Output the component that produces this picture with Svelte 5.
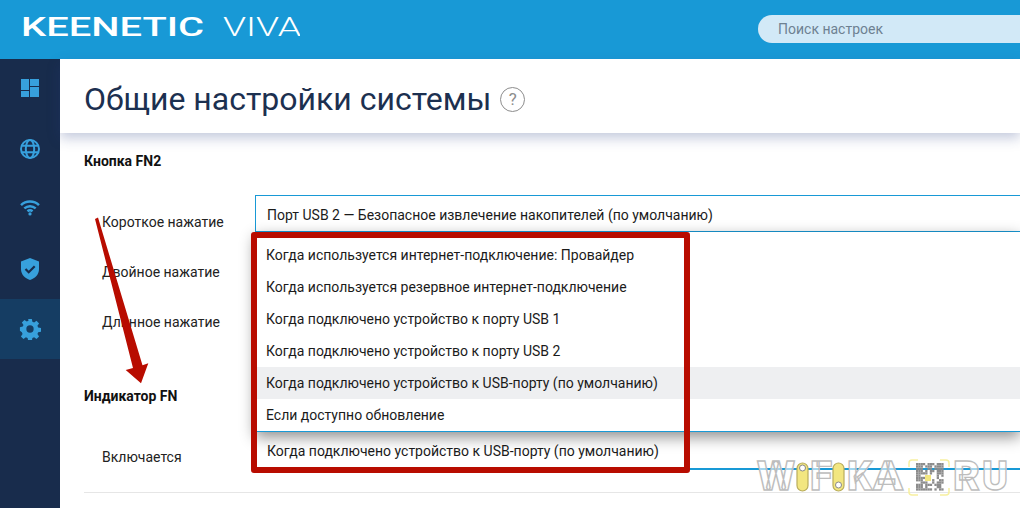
<script>
  const options = [
    'Когда используется интернет-подключение: Провайдер',
    'Когда используется резервное интернет-подключение',
    'Когда подключено устройство к порту USB 1',
    'Когда подключено устройство к порту USB 2',
    'Когда подключено устройство к USB-порту (по умолчанию)',
    'Если доступно обновление'
  ];
  const activeOption = 4;
  let seed = 7;
  const qr = [];
  for (let y = 0; y < 12; y++) {
    for (let x = 0; x < 12; x++) {
      seed = (seed * 73 + 41) % 101;
      const corner = (x < 3 && y < 3) || (x > 8 && y < 3) || (x < 3 && y > 8);
      const hole = x > 4 && x < 7 && y > 4 && y < 8;
      if (!hole && (corner || seed % 5 < 3)) qr.push({ x: 916 + x * 2.3, y: 463 + y * 2.3 });
    }
  }
</script>

<div class="page">
  <header class="topbar">
    <svg class="logo" width="300" height="59" viewBox="0 0 300 59" aria-label="Keenetic Viva">
      <text x="21" y="36" class="brand" textLength="183" lengthAdjust="spacingAndGlyphs">KEENETIC</text>
      <text x="223" y="36" class="model" textLength="78" lengthAdjust="spacingAndGlyphs">VIVA</text>
    </svg>
    <div class="search">Поиск настроек</div>
  </header>

  <div class="body">
    <nav class="side">
      <div class="nav-item">
        <svg width="20" height="20" viewBox="0 0 20 20"><path d="M1 0h8v11H1zM1 12h8v6H1zM10 0h9v7h-9zM10 8h9v10h-9z" /></svg>
      </div>
      <div class="nav-item">
        <svg width="22" height="22" viewBox="0 0 22 22" class="line">
          <circle cx="11" cy="11" r="9" />
          <ellipse cx="11" cy="11" rx="4.2" ry="9" />
          <path d="M2.5 7.7h17M2.5 14.3h17" />
        </svg>
      </div>
      <div class="nav-item">
        <svg width="22" height="17" viewBox="0 0 22 18" class="wifi">
          <path d="M1.5 6.5C6.5 1.500 15.500 1.500 20.500 6.500" />
          <path d="M5 10c3.500-3.200 8.500-3.200 12 0" />
          <path d="M8.300 13c1.600-1.300 3.800-1.300 5.400 0" />
          <circle cx="11" cy="15.800" r="1.700" class="dot" />
        </svg>
      </div>
      <div class="nav-item">
        <svg width="20" height="24" viewBox="0 0 20 24">
          <path d="M10 1l9 3.500v7.500c0 5.500-3.800 9.200-9 11-5.200-1.800-9-5.500-9-11V4.500z" />
          <path d="M5.500 12l3.200 3.200 6-6" class="check" />
        </svg>
      </div>
      <div class="nav-item current">
        <svg width="22" height="22" viewBox="0 0 24 24"><path fill-rule="evenodd" d="M10 1h4l.6 3.100 1.900.8 2.600-1.800 2.800 2.800-1.800 2.600.8 1.900 3.100.6v4l-3.100.6-.8 1.900 1.800 2.600-2.800 2.800-2.600-1.800-1.900.8-.6 3.100h-4l-.6-3.100-1.900-.8-2.600 1.800-2.800-2.800 1.800-2.600-.8-1.900L1 14v-4l3.100-.6.8-1.900L3.100 4.900l2.800-2.800 2.600 1.800 1.900-.8zM12 8a4 4 0 100 8 4 4 0 000-8z" /></svg>
      </div>
    </nav>

    <main class="main">
      <div class="title-bar">
        <h1>Общие настройки системы</h1>
        <span class="help">?</span>
      </div>

      <section class="content">
        <h2 class="first">Кнопка FN2</h2>
        <div class="row">
          <span class="label">Короткое нажатие</span>
          <div class="select-wrap">
            <div class="select">Порт USB 2 — Безопасное извлечение накопителей (по умолчанию)</div>
            <ul class="dropdown">
              {#each options as option, i}
                <li class:active={i === activeOption}>{option}</li>
              {/each}
            </ul>
          </div>
        </div>
        <div class="row"><span class="label">Двойное нажатие</span></div>
        <div class="row"><span class="label">Длинное нажатие</span></div>

        <h2 class="second">Индикатор FN</h2>
        <div class="row last">
          <span class="label">Включается</span>
          <div class="select-wrap">
            <div class="select plain">Когда подключено устройство к USB-порту (по умолчанию)</div>
          </div>
        </div>
      </section>
    </main>
  </div>

  <div class="red-box"></div>

  <svg class="overlay" width="1020" height="508" viewBox="0 0 1020 508" aria-hidden="true">
    <path class="arrow" d="M95 219L98 217.500 142.500 365.300 148.300 363.300 141 383.300 125.700 370 133 368z" />
    <g class="mark">
      <text x="757" y="490" textLength="38" lengthAdjust="spacingAndGlyphs">W</text>
      <text x="810" y="490" textLength="22" lengthAdjust="spacingAndGlyphs">F</text>
      <text x="847" y="490" textLength="25" lengthAdjust="spacingAndGlyphs">K</text>
      <text x="873" y="490" textLength="30" lengthAdjust="spacingAndGlyphs">A</text>
      <text x="953" y="490" textLength="27" lengthAdjust="spacingAndGlyphs">R</text>
      <text x="982" y="490" textLength="26" lengthAdjust="spacingAndGlyphs">U</text>
    </g>
    <rect class="pill" x="797" y="463" width="11" height="28" rx="5.500" />
    <circle class="pill-dot" cx="802.500" cy="468" r="3" />
    <rect class="pill" x="833" y="463" width="11" height="28" rx="5.500" />
    <circle class="pill-dot" cx="838.500" cy="485" r="3" />
    <path class="frame" d="M909 467v-4a3 3 0 013-3h6M940 460h6a3 3 0 013 3v4M949 488v4a3 3 0 01-3 3h-6M918 495h-6a3 3 0 01-3-3v-4" />
    {#each qr as c}
      <rect class="qr" x={c.x} y={c.y} width="2.300" height="2.300" />
    {/each}
    <rect class="qr-mid" x="925" y="475" width="6" height="6" />
  </svg>
</div>

<style>
  :global(body) {
    margin: 0;
    background: #fff;
  }
  .page {
    position: relative;
    width: 1020px;
    height: 508px;
    overflow: hidden;
    font-family: Roboto, "Liberation Sans", sans-serif;
    color: #1b1b1b;
  }
  .topbar {
    height: 59px;
    background: #1899d6;
    display: flex;
    align-items: center;
    justify-content: space-between;
  }
  .logo {
    display: block;
  }
  .brand {
    font: 500 25px Roboto, sans-serif;
    fill: #fff;
  }
  .model {
    font: 300 25px Roboto, sans-serif;
    fill: #fff;
  }
  .search {
    width: 242px;
    height: 28px;
    margin-top: -1px;
    padding-left: 20px;
    border-radius: 14px 0 0 14px;
    background: #d2e9f7;
    color: #6e8192;
    font-size: 14px;
    line-height: 28px;
  }
  .body {
    display: flex;
    height: 449px;
  }
  .side {
    width: 60px;
    flex: none;
    background: #182c4c;
  }
  .nav-item {
    height: 60px;
    display: flex;
    align-items: center;
    justify-content: center;
  }
  .nav-item.current {
    background: #153d63;
  }
  .nav-item svg {
    fill: #37a0dc;
  }
  .nav-item svg.line {
    fill: none;
    stroke: #37a0dc;
    stroke-width: 2;
  }
  .nav-item svg.wifi {
    fill: none;
    stroke: #37a0dc;
    stroke-width: 2.600;
    margin-top: -3px;
  }
  .nav-item .dot {
    fill: #37a0dc;
    stroke: none;
  }
  .nav-item .check {
    fill: none;
    stroke: #182c4c;
    stroke-width: 2.200;
  }
  .main {
    flex: 1;
    min-width: 0;
  }
  .title-bar {
    height: 68px;
    padding-top: 6px;
    padding-left: 24px;
    display: flex;
    align-items: center;
    gap: 9px;
    position: relative;
    background: #fff;
    box-shadow: 0 5px 12px rgba(40, 60, 130, 0.28);
  }
  h1 {
    margin: 0;
    font-size: 32px;
    font-weight: 400;
    color: #1c3050;
  }
  .help {
    width: 23px;
    height: 23px;
    border: 1px solid #8d8d8d;
    border-radius: 50%;
    color: #8d8d8d;
    font-size: 17px;
    line-height: 23px;
    text-align: center;
  }
  .content {
    padding-left: 24px;
  }
  h2 {
    margin: 0;
    font-size: 14px;
    font-weight: 700;
    color: #111;
    line-height: 20px;
  }
  h2.first {
    padding-top: 18px;
    padding-bottom: 24px;
  }
  h2.second {
    padding-top: 41px;
    padding-bottom: 26px;
  }
  .row {
    display: grid;
    grid-template-columns: 171px 1fr;
    height: 50px;
  }
  .row.last {
    height: 60px;
    border-bottom: 1px solid #e6e6e6;
  }
  .label {
    padding-left: 18px;
    padding-top: 18px;
    font-size: 14px;
    line-height: 18px;
    color: #222;
  }
  .row.last .label {
    padding-top: 16px;
  }
  .select-wrap {
    position: relative;
  }
  .select {
    height: 37px;
    box-sizing: border-box;
    padding-left: 11px;
    border: 1px solid #1899d6;
    border-right: 0;
    font-size: 14px;
    line-height: 38px;
    color: #1b1b1b;
  }
  .select.plain {
    border-top: 0;
    border-left: 0;
    border-bottom-width: 2px;
    line-height: 38px;
    height: 38px;
    padding-left: 12px;
  }
  .dropdown {
    position: absolute;
    left: 0;
    right: 0;
    top: 37px;
    margin: 0;
    padding: 7px 0 0;
    height: 192px;
    list-style: none;
    background: #fff;
    border-bottom: 1px solid #1899d6;
    box-shadow: 0 5px 14px rgba(0, 0, 0, 0.45);
    z-index: 2;
  }
  .dropdown li {
    height: 32px;
    padding-left: 11px;
    font-size: 14px;
    line-height: 32px;
  }
  .dropdown li.active {
    background: #eeeff1;
  }
  .red-box {
    position: absolute;
    left: 251px;
    top: 232px;
    width: 439px;
    height: 241px;
    box-sizing: border-box;
    border: 6px solid #b80c00;
    border-radius: 3px;
    z-index: 3;
  }
  .overlay {
    position: absolute;
    inset: 0;
    z-index: 4;
  }
  .arrow {
    fill: #b80c00;
  }
  .mark text {
    font: 900 40px Roboto, sans-serif;
    fill: rgba(255, 255, 255, 0.6);
    stroke: #bdbdbd;
    stroke-width: 1.300;
  }
  .pill {
    fill: #f2e680;
    stroke: #b9ad5c;
    stroke-width: 1.200;
  }
  .pill-dot {
    fill: #fff;
    stroke: #888;
    stroke-width: 1;
  }
  .frame {
    fill: none;
    stroke: #f7f0a0;
    stroke-width: 1.500;
  }
  .qr {
    fill: #8c8c8c;
  }
  .qr-mid {
    fill: #f2e680;
  }
</style>
